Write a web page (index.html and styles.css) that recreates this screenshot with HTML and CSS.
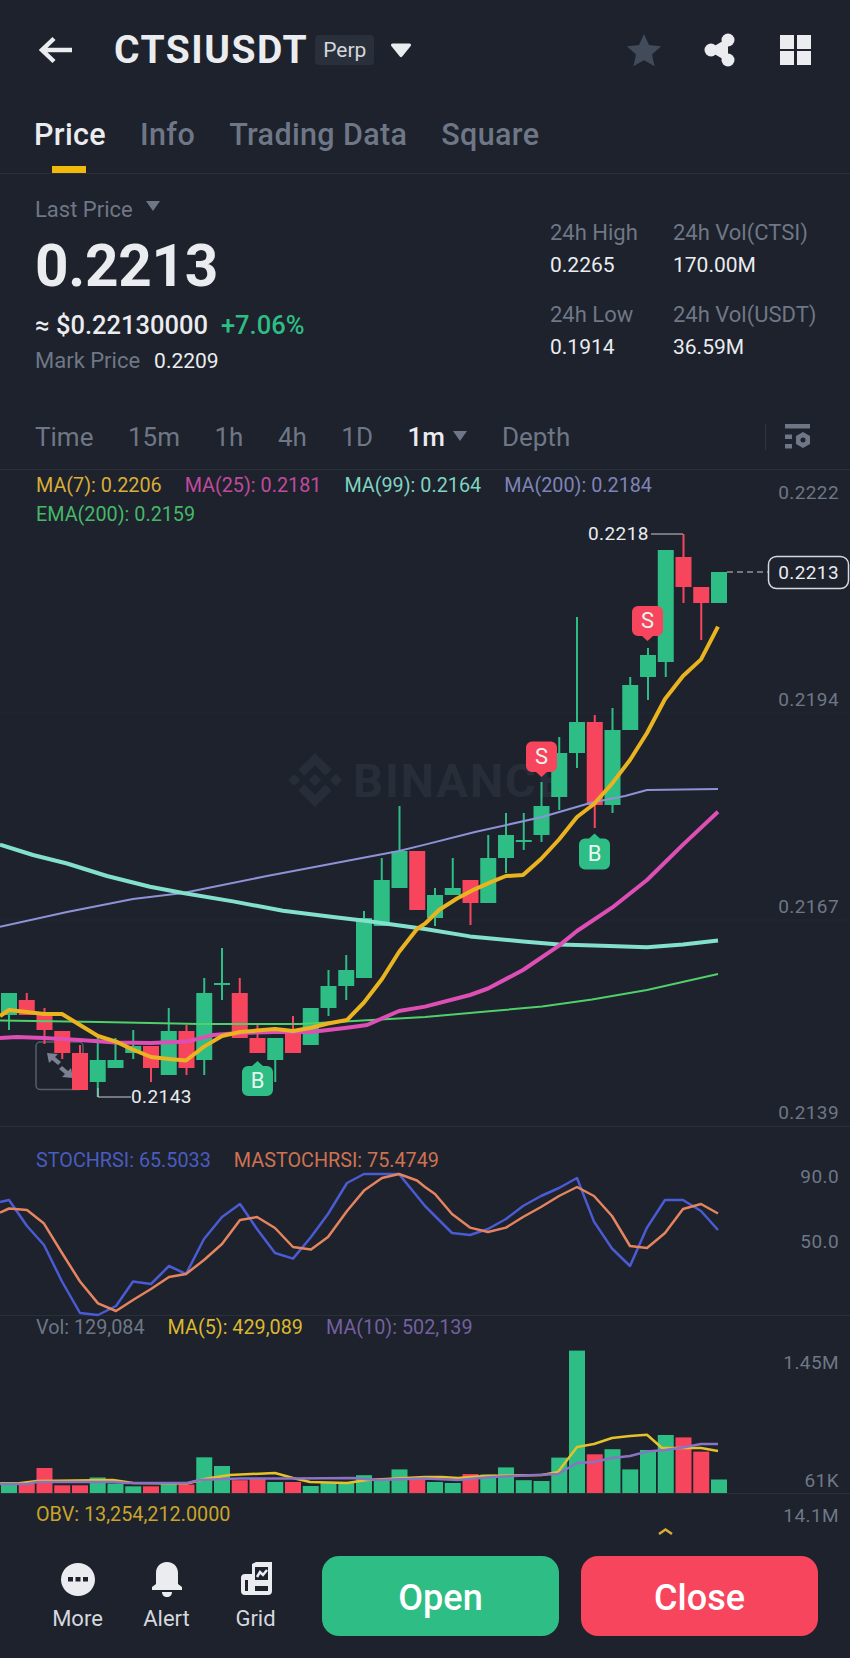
FILE: index.html
```html
<!DOCTYPE html>
<html lang="en">
  <head>
    <meta charset="UTF-8" />
    <meta name="viewport" content="width=device-width, initial-scale=1.0" />
    <title>CTSIUSDT Perp</title>
    <link rel="stylesheet" href="styles.css">
  </head>
  <body>
    <header class="topbar">
      <svg class="back-icon" width="34" height="28" viewBox="0 0 34 28"><path d="M3 14H33M15 2.5 3 14l12 11.5" /></svg>
      <h1 class="symbol">CTSIUSDT</h1>
      <span class="perp-tag">Perp</span>
      <svg class="caret-icon" width="22" height="16" viewBox="0 0 22 16"><path d="M2.5 1.5h17a1.5 1.5 0 0 1 1.2 2.4l-8.5 10.5a1.5 1.5 0 0 1-2.4 0L1.3 3.9A1.5 1.5 0 0 1 2.5 1.5z" /></svg>
      <div class="topbar-actions">
        <svg class="star-icon" width="36" height="34" viewBox="0 0 36 34"><path d="M18 1l5 11 12 1.300-9 8.200 2.600 11.800L18 27.300 7.400 33.300 10 21.500 1 13.300 13 12z" /></svg>
        <svg class="share-icon" width="34" height="34" viewBox="0 0 34 34"><path d="M25 7 8 17l17 10" /><circle cx="25" cy="7" r="6.500" /><circle cx="8" cy="17" r="6.500" /><circle cx="25" cy="27" r="6.500" /></svg>
        <svg class="apps-icon" width="31" height="30" viewBox="0 0 31 30"><rect width="14" height="14" /><rect x="17" width="14" height="14" /><rect y="16" width="14" height="14" /><rect x="17" y="16" width="14" height="14" /></svg>
      </div>
    </header>

    <nav class="tabs">
      <a class="tab tab-active">Price</a>
      <a class="tab">Info</a>
      <a class="tab">Trading Data</a>
      <a class="tab">Square</a>
    </nav>

    <section class="stats">
      <div class="stats-main">
        <div class="last-label">Last Price <span class="mini-caret"></span></div>
        <div class="last-price">0.2213</div>
        <div class="fiat-row"><span class="fiat">≈ $0.22130000</span><span class="change">+7.06%</span></div>
        <div class="mark-row"><span class="mark-label">Mark Price</span><span class="mark-value">0.2209</span></div>
      </div>
      <div class="stats-side">
        <div class="stat"><div class="stat-label">24h High</div><div class="stat-value">0.2265</div></div>
        <div class="stat"><div class="stat-label">24h Vol(CTSI)</div><div class="stat-value">170.00M</div></div>
        <div class="stat"><div class="stat-label">24h Low</div><div class="stat-value">0.1914</div></div>
        <div class="stat"><div class="stat-label">24h Vol(USDT)</div><div class="stat-value">36.59M</div></div>
      </div>
    </section>

    <div class="intervals">
      <span class="interval">Time</span>
      <span class="interval">15m</span>
      <span class="interval">1h</span>
      <span class="interval">4h</span>
      <span class="interval">1D</span>
      <span class="interval interval-active">1m <span class="mini-caret"></span></span>
      <span class="interval">Depth</span>
      <span class="interval-divider"></span>
      <svg class="settings-icon" width="27" height="27" viewBox="0 0 27 27"><path d="M1 0h25v4.500H1zM1 10.500h7V15H1zM1 20h7v4.500H1z" /><path fill-rule="evenodd" d="M19 8l7 4v8l-7 4-7-4v-8zm0 5.500a2.500 2.500 0 1 0 0 5 2.500 2.500 0 0 0 0-5z" /></svg>
    </div>

    <section class="pane pane-main">
      <svg class="pane-canvas" width="850" height="657" viewBox="0 470 850 657">
        <path class="grid-line" d="M0 713H850M0 920H850" />
        <g class="watermark">
          <path transform="translate(288 753) scale(2.250)" d="M16.624 13.9202l2.7175 2.7154-7.353 7.353-7.353-7.352 2.7175-2.7164 4.6355 4.6595 4.6356-4.6595zm4.6366-4.6366L24 12l-2.7154 2.7164L18.5682 12l2.6924-2.7164zm-9.272.001l2.7163 2.6914-2.7164 2.7174v-.001L9.2721 12l2.7164-2.7154zm-9.2722-.001L5.4088 12l-2.6914 2.6924L0 12l2.7164-2.7164zM11.9885.0115l7.353 7.329-2.7174 2.7154-4.6356-4.6356-4.6355 4.6595-2.7174-2.7154 7.353-7.353z" />
          <text x="353" y="797">BINANCE</text>
        </g>
        <g class="expand-btn">
          <rect x="36" y="1042" width="47" height="47.500" rx="4" />
          <path d="M47 1053l11 1-3 3 6 5-3 3-6-5-3 3zM73 1078l-11-1 3-3-6-5 3-3 6 5 3-3z" />
        </g>
        <g id="candles"></g>
        <polyline class="line ma200" points="0,926.7 67,912 133,899 183,893 267,876 333,863.5 399,851 425,844.6 475,832 542,817 592,802.5 625,796 647,790 718,789" />
        <polyline class="line ema200" points="0,1020.5 100,1022 200,1024 300,1024 425,1017 492,1011 542,1006.6 592,999.5 647,990 718,974" />
        <polyline class="line ma99" points="0,844.6 33,855 67,863.5 107,876 150,886.7 183,893 233,901.4 283,910.7 333,917 367,921 425,929 470,936.4 523,941.4 559,944.4 594,945.6 647,947.3 683,944.4 718,940.6" />
        <polyline class="line ma25" points="0,1038 17,1037 44,1038 80,1040 116,1042.4 151,1043 187,1041.6 213,1035 240,1033 275,1032 311,1032 347,1027.7 367,1025 399,1011 425,1006.6 470,995 488,988.5 523,970 559,945.6 577,931 612,907.7 647,880 683,844.6 718,811.8" />
        <polyline class="line ma7" points="0,1016 9,1010 27,1012 44,1014 62,1014 80,1025 98,1036 116,1041.6 133,1049.6 151,1057 169,1059 186,1060.5 204,1046.6 222,1036 240,1032 257,1030.6 275,1029 293,1031 311,1027.7 328,1023.5 347,1020 364,1002.5 382,979 399,952 417,929 425,923.7 439,910 457,898.5 474,889.6 492,881.6 506,876 523,875 541,859 559,839.5 577,817 594,804 612,783.6 630,760 647,733 665,699 683,676 701,659.4 718,626.6" />

        <path class="pointer-line" d="M98 1088V1097H131M651 534H683" />
        <text class="extreme-label" x="131" y="1103">0.2143</text>
        <text class="extreme-label" x="588" y="540">0.2218</text>

        <g class="badge badge-sell">
          <path d="M532 741.500h19a6 6 0 0 1 6 6V766a6 6 0 0 1-6 6h-4l-5.500 5-5.500-5h-4a6 6 0 0 1-6-6v-18.500a6 6 0 0 1 6-6z" />
          <text x="541.500" y="764">S</text>
        </g>
        <g class="badge badge-sell">
          <path d="M638 606h19a6 6 0 0 1 6 6v18a6 6 0 0 1-6 6h-4l-5.500 5-5.500-5h-4a6 6 0 0 1-6-6v-18a6 6 0 0 1 6-6z" />
          <text x="647.500" y="628">S</text>
        </g>
        <g class="badge badge-buy">
          <path d="M248 1066h4l5.500-5 5.500 5h4a6 6 0 0 1 6 6v18a6 6 0 0 1-6 6h-19a6 6 0 0 1-6-6v-18a6 6 0 0 1 6-6z" />
          <text x="257.500" y="1088">B</text>
        </g>
        <g class="badge badge-buy">
          <path d="M585 838.500h4l5.500-5 5.500 5h4a6 6 0 0 1 6 6v19a6 6 0 0 1-6 6h-19a6 6 0 0 1-6-6v-19a6 6 0 0 1 6-6z" />
          <text x="594.500" y="861">B</text>
        </g>

        <path class="last-dash" d="M727 572H768" />
        <rect class="last-box" x="768.500" y="556.500" width="80" height="32" rx="8" />
        <text class="axis-label last-text" x="839" y="579">0.2213</text>

        <text class="axis-label" x="839" y="499">0.2222</text>
        <text class="axis-label" x="839" y="706">0.2194</text>
        <text class="axis-label" x="839" y="913">0.2167</text>
        <text class="axis-label" x="839" y="1119">0.2139</text>
      </svg>
      <div class="legend legend-main">
        <span class="c-ma7">MA(7): 0.2206</span>
        <span class="c-ma25">MA(25): 0.2181</span>
        <span class="c-ma99">MA(99): 0.2164</span>
        <span class="c-ma200">MA(200): 0.2184</span>
        <span class="c-ema200 legend-break">EMA(200): 0.2159</span>
      </div>
    </section>

    <section class="pane pane-stoch">
      <svg class="pane-canvas" width="850" height="189" viewBox="0 1127 850 189">
        <polyline class="line thin stoch" points="0,1202 9,1200 27,1226 44,1245 62,1281.5 80,1313 98,1315 116,1306 133,1281.5 151,1284 169,1266 186,1274 204,1239 222,1217 240,1204 257,1229 275,1253 293,1258.6 311,1237 328,1214 347,1183 364,1174 382,1174 399,1174 425,1206 452,1233 470,1235 488,1229 506,1219 523,1206 541,1196 559,1188 577,1178 594,1221.6 612,1248.5 630,1266 647,1227.6 665,1200 683,1200 701,1211 718,1230" />
        <polyline class="line thin mastoch" points="0,1212.5 9,1208.5 27,1210 44,1223.6 62,1253 80,1281.5 98,1303.4 116,1311 133,1300 151,1289 169,1277 186,1274 204,1260 222,1244 240,1220 257,1217 275,1228 293,1247 311,1249.5 328,1237 347,1211 364,1190.6 382,1178 399,1174 417,1180.5 425,1187 435,1194 452,1214 470,1227.6 488,1232 506,1227.6 523,1217 541,1207 559,1196 577,1187 594,1196 612,1216 630,1246 647,1248 665,1233 683,1209 701,1204 718,1213.5" />
        <text class="axis-label" x="839" y="1183">90.0</text>
        <text class="axis-label" x="839" y="1248">50.0</text>
      </svg>
      <div class="legend legend-stoch">
        <span class="c-stoch">STOCHRSI: 65.5033</span>
        <span class="c-mastoch">MASTOCHRSI: 75.4749</span>
      </div>
    </section>

    <section class="pane pane-vol">
      <svg class="pane-canvas" width="850" height="178" viewBox="0 1316 850 178">
        <g id="volume"></g>
        <polyline class="line thin vol-ma5" points="0,1483.5 17,1483.5 37,1481 113,1480 133,1483 187,1483.5 207,1478.5 230,1475 275,1473 293,1478 310,1482 347,1483 367,1480 425,1477 442,1477 458,1478 485,1476 542,1475 558,1472 577,1447 594,1444 612,1438 630,1436 647,1434.7 662,1448 683,1448 701,1448 718,1451" />
        <polyline class="line thin vol-ma10" points="0,1484 27,1484 37,1482 113,1482 127,1483 187,1483 200,1480 240,1478.5 293,1478.5 353,1478 377,1480 425,1478.5 458,1480 492,1477 558,1474 577,1463 594,1462 612,1458 630,1456 647,1451.6 665,1450 683,1447.5 701,1444 718,1444" />
        <text class="axis-label" x="839" y="1369">1.45M</text>
        <text class="axis-label" x="839" y="1487">61K</text>
      </svg>
      <div class="legend legend-vol">
        <span class="c-vol">Vol: 129,084</span>
        <span class="c-ma5">MA(5): 429,089</span>
        <span class="c-ma10">MA(10): 502,139</span>
      </div>
    </section>

    <section class="pane pane-obv">
      <svg class="pane-canvas" width="850" height="54" viewBox="0 1494 850 54">
        <text class="axis-label" x="839" y="1522">14.1M</text>
        <path class="collapse-chevron" d="M659 1534l6.500-4.500 6.500 4.500" />
      </svg>
      <div class="legend legend-obv">
        <span class="c-obv">OBV: 13,254,212.0000</span>
      </div>
    </section>

    <footer class="bottombar">
      <div class="tool">
        <svg class="tool-icon" width="36" height="36" viewBox="0 0 36 36"><path fill-rule="evenodd" d="M18 1a17 16.500 0 1 1 0 33 17 16.500 0 0 1 0-33zM8 15v4.500h5V15zm7.500 0v4.500h5V15zm7.500 0v4.500h5V15z" /></svg>
        <span class="tool-label">More</span>
      </div>
      <div class="tool">
        <svg class="tool-icon" width="36" height="36" viewBox="0 0 36 36"><path d="M18 0c7 0 11 5 11 11v11l4 3v3H3v-3l4-3V11C7 5 11 0 18 0z" /><path d="M13 30h10c0 3-2 5-5 5s-5-2-5-5z" /></svg>
        <span class="tool-label">Alert</span>
      </div>
      <div class="tool">
        <svg class="tool-icon" width="36" height="36" viewBox="0 0 36 36"><path fill-rule="evenodd" d="M14 2l4-2h16v29a4 4 0 0 1-4 4H7a4 4 0 0 1-4-4V15a4 4 0 0 1 4-3h7zM17 5v13h13V5zM7 18v11h3V18zm10 6v5h13v-5z" /><path class="grid-spark" d="M19 15l3-5 3 3 4-5" /></svg>
        <span class="tool-label">Grid</span>
      </div>
      <button class="trade-btn trade-open">Open</button>
      <button class="trade-btn trade-close">Close</button>
    </footer>

    <script src="chart.js"></script>
  </body>
</html>
```

FILE: styles.css
```css
* {
  box-sizing: border-box;
}
html,
body {
  margin: 0;
  padding: 0;
}
body {
  width: 850px;
  height: 1658px;
  overflow: hidden;
  font-family: Roboto, "Liberation Sans", sans-serif;
  background-color: #1d222c;
  color: #eaecef;
}

/* top bar */
.topbar {
  display: flex;
  align-items: center;
  height: 100px;
  padding: 0 39px;
}
.back-icon {
  fill: none;
  stroke: #eaecef;
  stroke-width: 4.5;
}
.symbol {
  margin: 0 0 0 41px;
  font-size: 39px;
  font-weight: 700;
  letter-spacing: 1.5px;
  color: #eaecef;
}
.perp-tag {
  margin-left: 7px;
  padding: 0 8px;
  height: 30px;
  line-height: 30px;
  font-size: 21px;
  background-color: #2a303b;
  border-radius: 4px;
  color: #d5d8dd;
}
.caret-icon {
  margin-left: 16px;
  fill: #eaecef;
}
.topbar-actions {
  display: flex;
  align-items: center;
  margin-left: auto;
  gap: 41px;
}
.star-icon {
  fill: #414b5a;
}
.share-icon {
  fill: #eaecef;
  stroke: #eaecef;
  stroke-width: 3.5;
}
.share-icon circle {
  stroke: none;
}
.apps-icon {
  margin-left: 2px;
  fill: #eaecef;
}

/* tabs */
.tabs {
  display: flex;
  gap: 34px;
  height: 74px;
  padding: 14px 0 0 34px;
  border-bottom: 1px solid #2a303a;
}
.tab {
  position: relative;
  font-size: 30.5px;
  line-height: 42px;
  font-weight: 500;
  letter-spacing: 0.35px;
  color: #6f7786;
}
.tab-active {
  color: #eaecef;
}
.tab-active::after {
  content: "";
  position: absolute;
  left: 18px;
  bottom: 0;
  width: 34px;
  height: 7px;
  background-color: #f0b90b;
}

/* price stats */
.stats {
  display: flex;
  height: 231px;
}
.stats-main {
  padding: 21px 0 0 35px;
}
.last-label {
  font-size: 22px;
  line-height: 30px;
  color: #6f7786;
}
.mini-caret {
  display: inline-block;
  margin-left: 8px;
  vertical-align: 6px;
  border-left: 7px solid transparent;
  border-right: 7px solid transparent;
  border-top: 10px solid #6f7786;
}
.last-price {
  margin-top: 2px;
  font-size: 58.5px;
  line-height: 78px;
  font-weight: 700;
  letter-spacing: -0.3px;
  color: #eaecef;
}
.fiat-row {
  margin-top: 5px;
  line-height: 30px;
  display: flex;
  gap: 13px;
  font-size: 25.5px;
  font-weight: 500;
}
.change {
  color: #2dbd85;
}
.mark-row {
  margin-top: 6px;
  display: flex;
  gap: 14px;
  line-height: 30px;
}
.mark-label {
  font-size: 22px;
  color: #6f7786;
}
.mark-value {
  font-size: 21px;
  color: #eaecef;
}
.stats-side {
  display: grid;
  grid-template-columns: 123px 1fr;
  grid-auto-rows: 64px;
  row-gap: 18px;
  width: 300px;
  margin-left: auto;
  padding-top: 43px;
}
.stat-label {
  font-size: 22px;
  line-height: 32px;
  color: #6f7786;
  white-space: nowrap;
}
.stat-value {
  font-size: 21px;
  line-height: 32px;
  color: #eaecef;
}

/* interval bar */
.intervals {
  display: flex;
  align-items: center;
  gap: 34.5px;
  height: 65px;
  padding: 0 39px 0 35px;
  border-bottom: 1px solid #2a303a;
}
.interval {
  font-size: 26px;
  color: #6f7786;
}
.interval-active {
  font-weight: 500;
  color: #eaecef;
}
.interval-active .mini-caret {
  margin-left: 2px;
  vertical-align: 5px;
}
.interval-divider {
  width: 1px;
  height: 26px;
  margin-left: auto;
  margin-right: -16px;
  background-color: #2e3541;
}
.settings-icon {
  fill: #6f7786;
}

/* chart panes */
.pane {
  position: relative;
  border-bottom: 1px solid #2a303a;
}
.pane-main {
  height: 657px;
}
.pane-stoch {
  height: 189px;
  padding-top: 22px;
}
.pane-vol {
  height: 178px;
}
.pane-obv {
  height: 54px;
  padding-top: 9px;
  border-bottom: none;
}
.pane-canvas {
  position: absolute;
  left: 0;
  top: 0;
  overflow: visible;
}
.legend {
  position: relative;
  display: flex;
  flex-wrap: wrap;
  column-gap: 23px;
  padding-left: 36px;
  font-size: 19.8px;
  line-height: 24px;
}
.legend-main {
  padding-top: 1px;
  line-height: 29px;
}
.legend-break {
  flex-basis: 100%;
}
.c-ma7 { color: #d9ad37; }
.c-ma25 { color: #c04a9f; }
.c-ma99 { color: #7fd4c2; }
.c-ma200 { color: #7f84b8; }
.c-ema200 { color: #46b868; }
.c-stoch { color: #4a5cc0; }
.c-mastoch { color: #cf7252; }
.c-vol { color: #6f7786; }
.c-ma5 { color: #dcb82f; }
.c-ma10 { color: #73609f; }
.c-obv { color: #c9a42c; }

.grid-line {
  stroke: #232934;
  stroke-width: 1;
}
.watermark {
  fill: #282e39;
}
.watermark text {
  font-size: 47px;
  font-weight: 700;
  letter-spacing: 2px;
}
.expand-btn rect {
  fill: none;
  stroke: #565d6b;
  stroke-width: 1.5;
}
.expand-btn path {
  fill: #7a8190;
}
.candle-up {
  fill: #2dbd85;
}
.candle-down {
  fill: #f8455e;
}
.line {
  fill: none;
  stroke-linejoin: round;
  stroke-width: 4;
}
.line.thin {
  stroke-width: 2.5;
}
.ma7 { stroke: #eab320; }
.ma25 { stroke: #de4fb6; }
.ma99 { stroke: #83e0cd; }
.line.ma200 { stroke: #8f92d6; stroke-width: 2; }
.line.ema200 { stroke: #4fd06a; stroke-width: 2; }
.stoch { stroke: #4a5bd4; }
.mastoch { stroke: #e5845f; }
.vol-ma5 { stroke: #e6c22a; }
.vol-ma10 { stroke: #8a72c4; }

.pointer-line {
  fill: none;
  stroke: #c9ccd1;
  stroke-width: 1;
}
.extreme-label {
  font-size: 19px;
  letter-spacing: 0.4px;
  fill: #eaecef;
}
.badge text {
  font-size: 22px;
  text-anchor: middle;
  fill: #e9f5f1;
}
.badge-sell path {
  fill: #f8455e;
}
.badge-buy path {
  fill: #2dbd85;
}
.last-dash {
  stroke: #c9ccd1;
  stroke-width: 1;
  stroke-dasharray: 6 4;
}
.last-box {
  fill: #1d222c;
  stroke: #d5d8dd;
  stroke-width: 1.5;
}
.axis-label {
  font-size: 19px;
  letter-spacing: 0.4px;
  text-anchor: end;
  fill: #6f7786;
}
.last-text {
  fill: #eaecef;
}
.collapse-chevron {
  fill: none;
  stroke: #d9ad37;
  stroke-width: 2.5;
}

/* bottom bar */
.bottombar {
  display: flex;
  align-items: flex-start;
  height: 110px;
  padding: 8px 0 0 33px;
}
.tool {
  display: flex;
  flex-direction: column;
  align-items: center;
  width: 89px;
  padding-top: 6px;
}
.tool-icon {
  fill: #eaecef;
}
.grid-spark {
  fill: none;
  stroke: #eaecef;
  stroke-width: 2.5;
}
.tool-label {
  margin-top: 7px;
  font-size: 22px;
  line-height: 28px;
  color: #d5d8dd;
}
.trade-btn {
  width: 237px;
  height: 80px;
  margin-left: 22px;
  padding-top: 4px;
  border: none;
  border-radius: 17px;
  font-family: inherit;
  font-size: 36px;
  font-weight: 500;
  color: #ffffff;
}
.trade-open {
  background-color: #2dbd85;
}
.trade-close {
  background-color: #f8455e;
}
```

FILE: chart.js
```js
const SVG_NS = "http://www.w3.org/2000/svg";
const BAR_W = 16;

// dir, body top, body bottom, wick top, wick bottom (page px)
const candles = [
  [1, 993, 1015, 993, 1030],
  [0, 1000, 1015, 993, 1015],
  [0, 1013, 1030, 1008, 1044],
  [0, 1031, 1053, 1031, 1059],
  [0, 1053, 1090, 1045, 1090],
  [1, 1060, 1082, 1038, 1097],
  [1, 1060, 1068, 1038, 1068],
  [1, 1046, 1053, 1030, 1059],
  [0, 1046, 1068, 1046, 1082],
  [1, 1031, 1075, 1008, 1075],
  [0, 1031, 1068, 1025, 1075],
  [1, 993, 1060, 978, 1075],
  [1, 983, 985, 948, 1000],
  [0, 993, 1038, 978, 1038],
  [0, 1038, 1053, 1025, 1053],
  [1, 1038, 1060, 1038, 1082],
  [0, 1031, 1053, 1016, 1053],
  [1, 1008, 1045, 1008, 1045],
  [1, 986, 1008, 970, 1016],
  [1, 970, 986, 955, 1000],
  [1, 918, 978, 911, 978],
  [1, 880, 926, 858, 926],
  [1, 851, 888, 806, 888],
  [0, 851, 910, 851, 910],
  [1, 895, 918, 888, 926],
  [1, 888, 895, 858, 895],
  [0, 880, 903, 880, 925],
  [1, 858, 903, 835, 903],
  [1, 835, 858, 813, 873],
  [1, 840, 842, 813, 850],
  [1, 806, 835, 782, 842],
  [1, 753, 797, 737, 810],
  [1, 722, 753, 617, 768],
  [0, 722, 805, 715, 828],
  [1, 730, 805, 708, 813],
  [1, 685, 730, 677, 730],
  [1, 655, 677, 648, 700],
  [1, 550, 662, 550, 677],
  [0, 557, 587, 534, 603],
  [0, 587, 603, 587, 640],
  [1, 572, 603, 572, 603],
];

const volumes = [
  11, 9.4, 25, 7.7, 7.7, 15.5, 9.4, 6.7, 6.7, 9.4, 8.4, 35.7, 27, 12.8,
  14.5, 11, 11, 7, 11, 10, 17.8, 13.5, 23.6, 13.5, 11, 10, 18.9, 18.5,
  25.6, 12.8, 12, 35.4, 142.4, 38.7, 43.8, 23.6, 43, 58, 55.6, 41.4, 13.5,
];

function barX(i) {
  return 9 + 17.75 * i;
}

function addRect(parent, cls, x, y, w, h) {
  const r = document.createElementNS(SVG_NS, "rect");
  r.setAttribute("class", cls);
  r.setAttribute("x", x);
  r.setAttribute("y", y);
  r.setAttribute("width", w);
  r.setAttribute("height", h);
  parent.appendChild(r);
}

const candleGroup = document.getElementById("candles");
const volumeGroup = document.getElementById("volume");

candles.forEach(([up, top, bottom, wickTop, wickBottom], i) => {
  const cls = up ? "candle-up" : "candle-down";
  const cx = barX(i);
  addRect(candleGroup, cls, cx - 1, wickTop, 2, wickBottom - wickTop);
  addRect(candleGroup, cls, cx - BAR_W / 2, top, BAR_W, bottom - top);
  addRect(volumeGroup, cls, cx - BAR_W / 2, 1493 - volumes[i], BAR_W, volumes[i]);
});
```
